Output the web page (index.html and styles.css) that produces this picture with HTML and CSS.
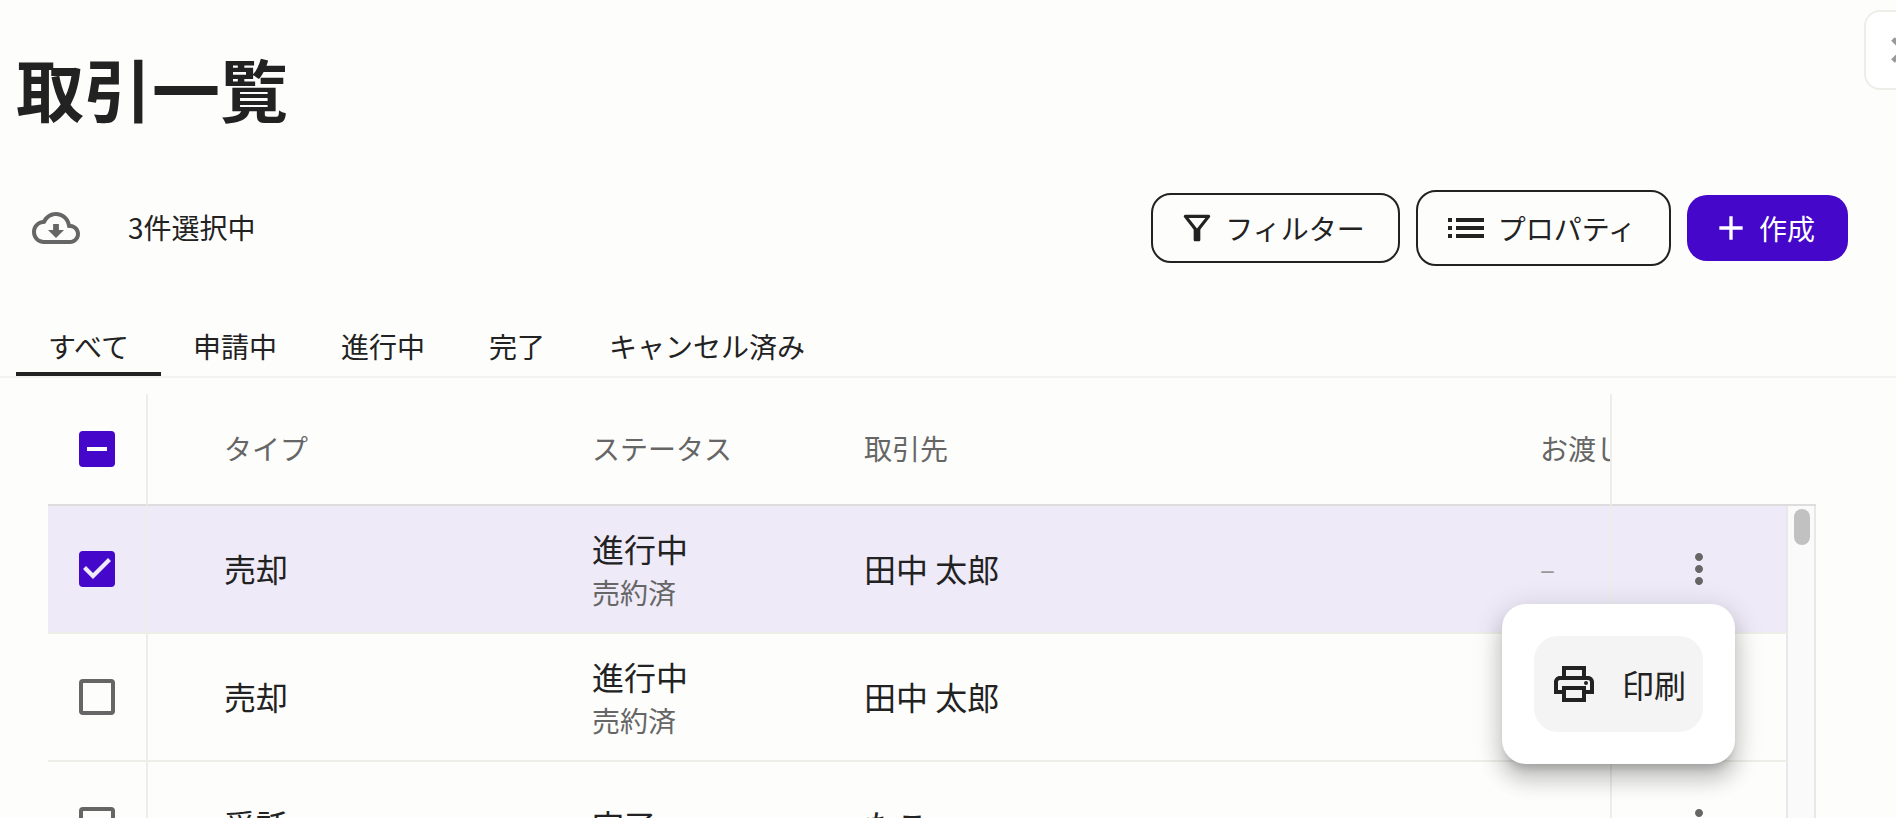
FILE: index.html
```
<!DOCTYPE html>
<html lang="ja">
<head>
    <meta charset="UTF-8">
    <meta name="viewport" content="width=device-width, initial-scale=1.0">
    <title>取引一覧</title>
    <link rel="stylesheet" href="styles.css">
</head>
<body>

    <button class="close-button" aria-label="閉じる">
        <svg class="icon-small" viewBox="0 0 24 24"><path d="M19 6.41L17.59 5 12 10.59 6.41 5 5 6.41 10.59 12 5 17.59 6.41 19 12 13.41 17.59 19 19 17.59 13.41 12z"/></svg>
    </button>

    <h1 class="page-title">取引一覧</h1>

    <!-- Toolbar -->
    <div class="toolbar">
        <button class="icon-button" aria-label="ダウンロード">
            <svg class="icon" viewBox="0 0 24 24"><path d="M19.35 10.04C18.67 6.59 15.64 4 12 4 9.11 4 6.6 5.64 5.35 8.04 2.34 8.36 0 10.91 0 14c0 3.31 2.69 6 6 6h13c2.76 0 5-2.24 5-5 0-2.64-2.05-4.78-4.65-4.96zM19 18H6c-2.21 0-4-1.79-4-4 0-2.05 1.53-3.76 3.56-3.97l1.07-.11.5-.95C8.08 7.14 9.94 6 12 6c2.62 0 4.88 1.86 5.39 4.43l.3 1.5 1.53.11c1.56.1 2.78 1.41 2.78 2.96 0 1.65-1.35 3-3 3zm-5.55-8h-2.9v3H8l4 4 4-4h-2.55z"/></svg>
        </button>
        <span class="selected-count">3件選択中</span>
        <div class="actions">
            <button class="button">
                <svg class="icon-small" viewBox="0 0 24 24"><path d="M7 6h10l-5.01 6.3L7 6zm-2.75-.39C6.27 8.2 10 13 10 13v6c0 .55.45 1 1 1h2c.55 0 1-.45 1-1v-6s3.72-4.8 5.74-7.39c.51-.66.04-1.61-.79-1.61H5.04c-.83 0-1.3.95-.79 1.61z"/></svg>
                フィルター
            </button>
            <button class="button">
                <svg class="icon" viewBox="0 0 24 24"><path d="M3 13h2v-2H3v2zm0 4h2v-2H3v2zm0-8h2V7H3v2zm4 4h14v-2H7v2zm0 4h14v-2H7v2zM7 7v2h14V7H7z"/></svg>
                プロパティ
            </button>
            <button class="button primary">
                <svg class="icon-small" viewBox="0 0 24 24"><path d="M19 13h-6v6h-2v-6H5v-2h6V5h2v6h6v2z"/></svg>
                作成
            </button>
        </div>
    </div>

    <!-- Status tabs -->
    <div class="tabs" role="tablist">
        <button class="tab active" role="tab" aria-selected="true">すべて</button>
        <button class="tab" role="tab">申請中</button>
        <button class="tab" role="tab">進行中</button>
        <button class="tab" role="tab">完了</button>
        <button class="tab" role="tab">キャンセル済み</button>
    </div>

    <!-- Deals table -->
    <div class="grid">
        <table class="deals">
            <colgroup>
                <col class="col-check">
                <col class="col-type">
                <col class="col-status">
                <col class="col-client">
                <col class="col-date">
                <col class="col-menu">
                <col class="col-scroll">
            </colgroup>
            <thead>
                <tr>
                    <th class="cell-check"><input type="checkbox" class="checkbox partial" aria-label="すべて選択"></th>
                    <th class="cell-type">タイプ</th>
                    <th>ステータス</th>
                    <th>取引先</th>
                    <th class="cell-date"><div class="clip">お渡し</div></th>
                    <th class="cell-menu"></th>
                    <th></th>
                </tr>
            </thead>
            <tbody>
                <tr class="selected">
                    <td class="cell-check"><input type="checkbox" class="checkbox" aria-label="行を選択" checked></td>
                    <td class="cell-type">売却</td>
                    <td>進行中<div class="sub">売約済</div></td>
                    <td>田中 太郎</td>
                    <td class="empty">–</td>
                    <td class="cell-menu">
                        <button class="icon-button" aria-label="メニュー"><svg class="icon" viewBox="0 0 24 24"><path d="M12 8c1.1 0 2-.9 2-2s-.9-2-2-2-2 .9-2 2 .9 2 2 2zm0 2c-1.1 0-2 .9-2 2s.9 2 2 2 2-.9 2-2-.9-2-2-2zm0 6c-1.1 0-2 .9-2 2s.9 2 2 2 2-.9 2-2-.9-2-2-2z"/></svg></button>
                        <div class="menu" role="menu">
                            <button class="menu-item" role="menuitem">
                                <svg class="icon" viewBox="0 0 24 24"><path d="M19 8h-1V3H6v5H5c-1.66 0-3 1.34-3 3v6h4v4h12v-4h4v-6c0-1.66-1.34-3-3-3zM8 5h8v3H8V5zm8 12v2H8v-4h8v4zm2-2v-2H6v2H4v-4c0-.55.45-1 1-1h14c.55 0 1 .45 1 1v4h-2z"/><circle cx="18" cy="11.5" r="1"/></svg>
                                印刷
                            </button>
                        </div>
                    </td>
                    <td class="cell-scroll" rowspan="3"><div class="thumb"></div></td>
                </tr>
                <tr>
                    <td class="cell-check"><input type="checkbox" class="checkbox" aria-label="行を選択"></td>
                    <td class="cell-type">売却</td>
                    <td>進行中<div class="sub">売約済</div></td>
                    <td>田中 太郎</td>
                    <td class="empty"></td>
                    <td class="cell-menu"></td>
                </tr>
                <tr>
                    <td class="cell-check"><input type="checkbox" class="checkbox" aria-label="行を選択"></td>
                    <td class="cell-type">受託</td>
                    <td>完了</td>
                    <td>たこ</td>
                    <td class="empty"></td>
                    <td class="cell-menu">
                        <button class="icon-button" aria-label="メニュー"><svg class="icon" viewBox="0 0 24 24"><path d="M12 8c1.1 0 2-.9 2-2s-.9-2-2-2-2 .9-2 2 .9 2 2 2zm0 2c-1.1 0-2 .9-2 2s.9 2 2 2 2-.9 2-2-.9-2-2-2zm0 6c-1.1 0-2 .9-2 2s.9 2 2 2 2-.9 2-2-.9-2-2-2z"/></svg></button>
                    </td>
                </tr>
            </tbody>
        </table>
    </div>

</body>
</html>
```
FILE: styles.css
```
/* General styles */
* {
    box-sizing: border-box;
}

html {
    height: 100%;
    overflow: hidden;
}

body {
    font-family: "Noto Sans CJK JP", sans-serif;
    font-size: 28px;
    margin: 0;
    height: 100%;
    background-color: #fdfdfc;
    color: #222;
    overflow: hidden;
    position: relative;
}

button {
    font: inherit;
    color: inherit;
    background: none;
    border: none;
    padding: 0;
    cursor: pointer;
}

.icon,
.icon-small {
    display: block;
    flex: none;
    fill: currentColor;
}

.icon {
    width: 48px;
    height: 48px;
}

.icon-small {
    width: 40px;
    height: 40px;
}

/* Half hidden behind the right edge */
.close-button {
    position: absolute;
    top: 10px;
    right: -48px;
    padding: 18px;
    color: #999;
    background-color: #fff;
    border: 2px solid #eeeee8;
    border-radius: 16px;
}

.close-button path {
    stroke: currentColor;
    stroke-width: 1;
}

.page-title {
    margin: 0;
    padding: 38px 16px 0;
    font-size: 68px;
    line-height: 100px;
    font-weight: bold;
}

/* Toolbar */
.toolbar {
    display: flex;
    align-items: center;
    margin-top: 52px;
    padding: 0 48px 0 32px;
}

.icon-button {
    color: #666;
}

.selected-count {
    margin-left: 48px;
    padding-bottom: 2px;
}

.actions {
    display: flex;
    align-items: center;
    gap: 16px;
    margin-left: auto;
}

.button {
    display: flex;
    align-items: center;
    gap: 8px;
    padding: 12px 33px 12px 24px;
    line-height: 42px;
    border: 2px solid #222;
    border-radius: 20px;
}

.button.primary {
    color: #fff;
    background-color: #4507c9;
    border: none;
}

/* Tabs */
.tabs {
    display: flex;
    margin-top: 52px;
    padding: 0 16px;
    border-bottom: 2px solid #f3f3f3;
}

.tab {
    padding: 6px 32px 4px;
    line-height: 44px;
    border-bottom: 4px solid transparent;
}

.tab.active {
    border-color: #222;
}

/* Table */
.grid {
    padding: 16px 80px 0 48px;
}

.deals {
    width: 100%;
    table-layout: fixed;
    border-collapse: separate;
    border-spacing: 0;
}

.col-check {
    width: 100px;
}

.col-type {
    width: 412px;
}

.col-status {
    width: 272px;
}

.col-date {
    width: 102px;
}

.col-menu {
    width: 178px;
}

.col-scroll {
    width: 28px;
}

.deals th,
.deals td {
    padding: 0 32px 2px;
    text-align: left;
    vertical-align: middle;
}

.deals th {
    height: 112px;
    font-weight: normal;
    color: #666;
    border-bottom: 2px solid #ddd;
}

.deals td {
    height: 128px;
    font-size: 32px;
    line-height: 48px;
    border-bottom: 2px solid #eeeee8;
}

.deals .cell-check {
    padding: 0;
    text-align: center;
    border-right: 2px solid #eeeee8;
}

.deals .cell-type {
    padding-left: 76px;
}

.deals .cell-date {
    padding-right: 0;
}

.clip {
    overflow: hidden;
    white-space: nowrap;
}

.deals .sub {
    font-size: 28px;
    line-height: 40px;
    color: #666;
}

.deals .empty {
    font-size: 28px;
    color: #999;
}

.deals .cell-menu {
    position: relative;
    padding: 0;
    border-left: 2px solid #eeeee8;
}

.deals td.cell-menu {
    border-right: 2px solid #e8e8e8;
}

.cell-menu .icon-button {
    display: block;
    margin: 0 auto;
}

.selected td {
    background-color: #eeeaf8;
}

.deals .cell-scroll {
    padding: 3px 4px 0 6px;
    vertical-align: top;
    background-color: #fafafa;
    border-right: 2px solid #e8e8e8;
}

.thumb {
    height: 36px;
    border-radius: 8px;
    background-color: #c1c1c1;
}

/* Checkboxes */
.checkbox {
    appearance: none;
    display: grid;
    place-items: center;
    width: 36px;
    height: 36px;
    margin: 0 auto;
    border: 4px solid #666;
    border-radius: 4px;
}

.checkbox:checked,
.checkbox.partial {
    background-color: #4507c9;
    border-color: #4507c9;
}

.checkbox.partial::before {
    content: "";
    width: 20px;
    height: 4px;
    background-color: #fff;
}

.checkbox:checked::before {
    content: "";
    width: 28px;
    height: 22px;
    background-color: #eeeaf8;
    clip-path: polygon(0 11px, 3px 8px, 10px 15px, 25px 0, 28px 3px, 10px 21px);
}

/* Row menu */
.menu {
    position: absolute;
    top: 98px;
    right: 51px;
    z-index: 10;
    padding: 32px;
    background-color: #fff;
    border-radius: 24px;
    box-shadow: 0 10px 10px -6px rgba(0, 0, 0, 0.2), 0 16px 20px 2px rgba(0, 0, 0, 0.14), 0 6px 28px 4px rgba(0, 0, 0, 0.12);
}

.menu-item {
    display: flex;
    align-items: center;
    gap: 24px;
    padding: 24px 17px 24px 16px;
    white-space: nowrap;
    background-color: #f4f4f4;
    border-radius: 24px;
}
```
